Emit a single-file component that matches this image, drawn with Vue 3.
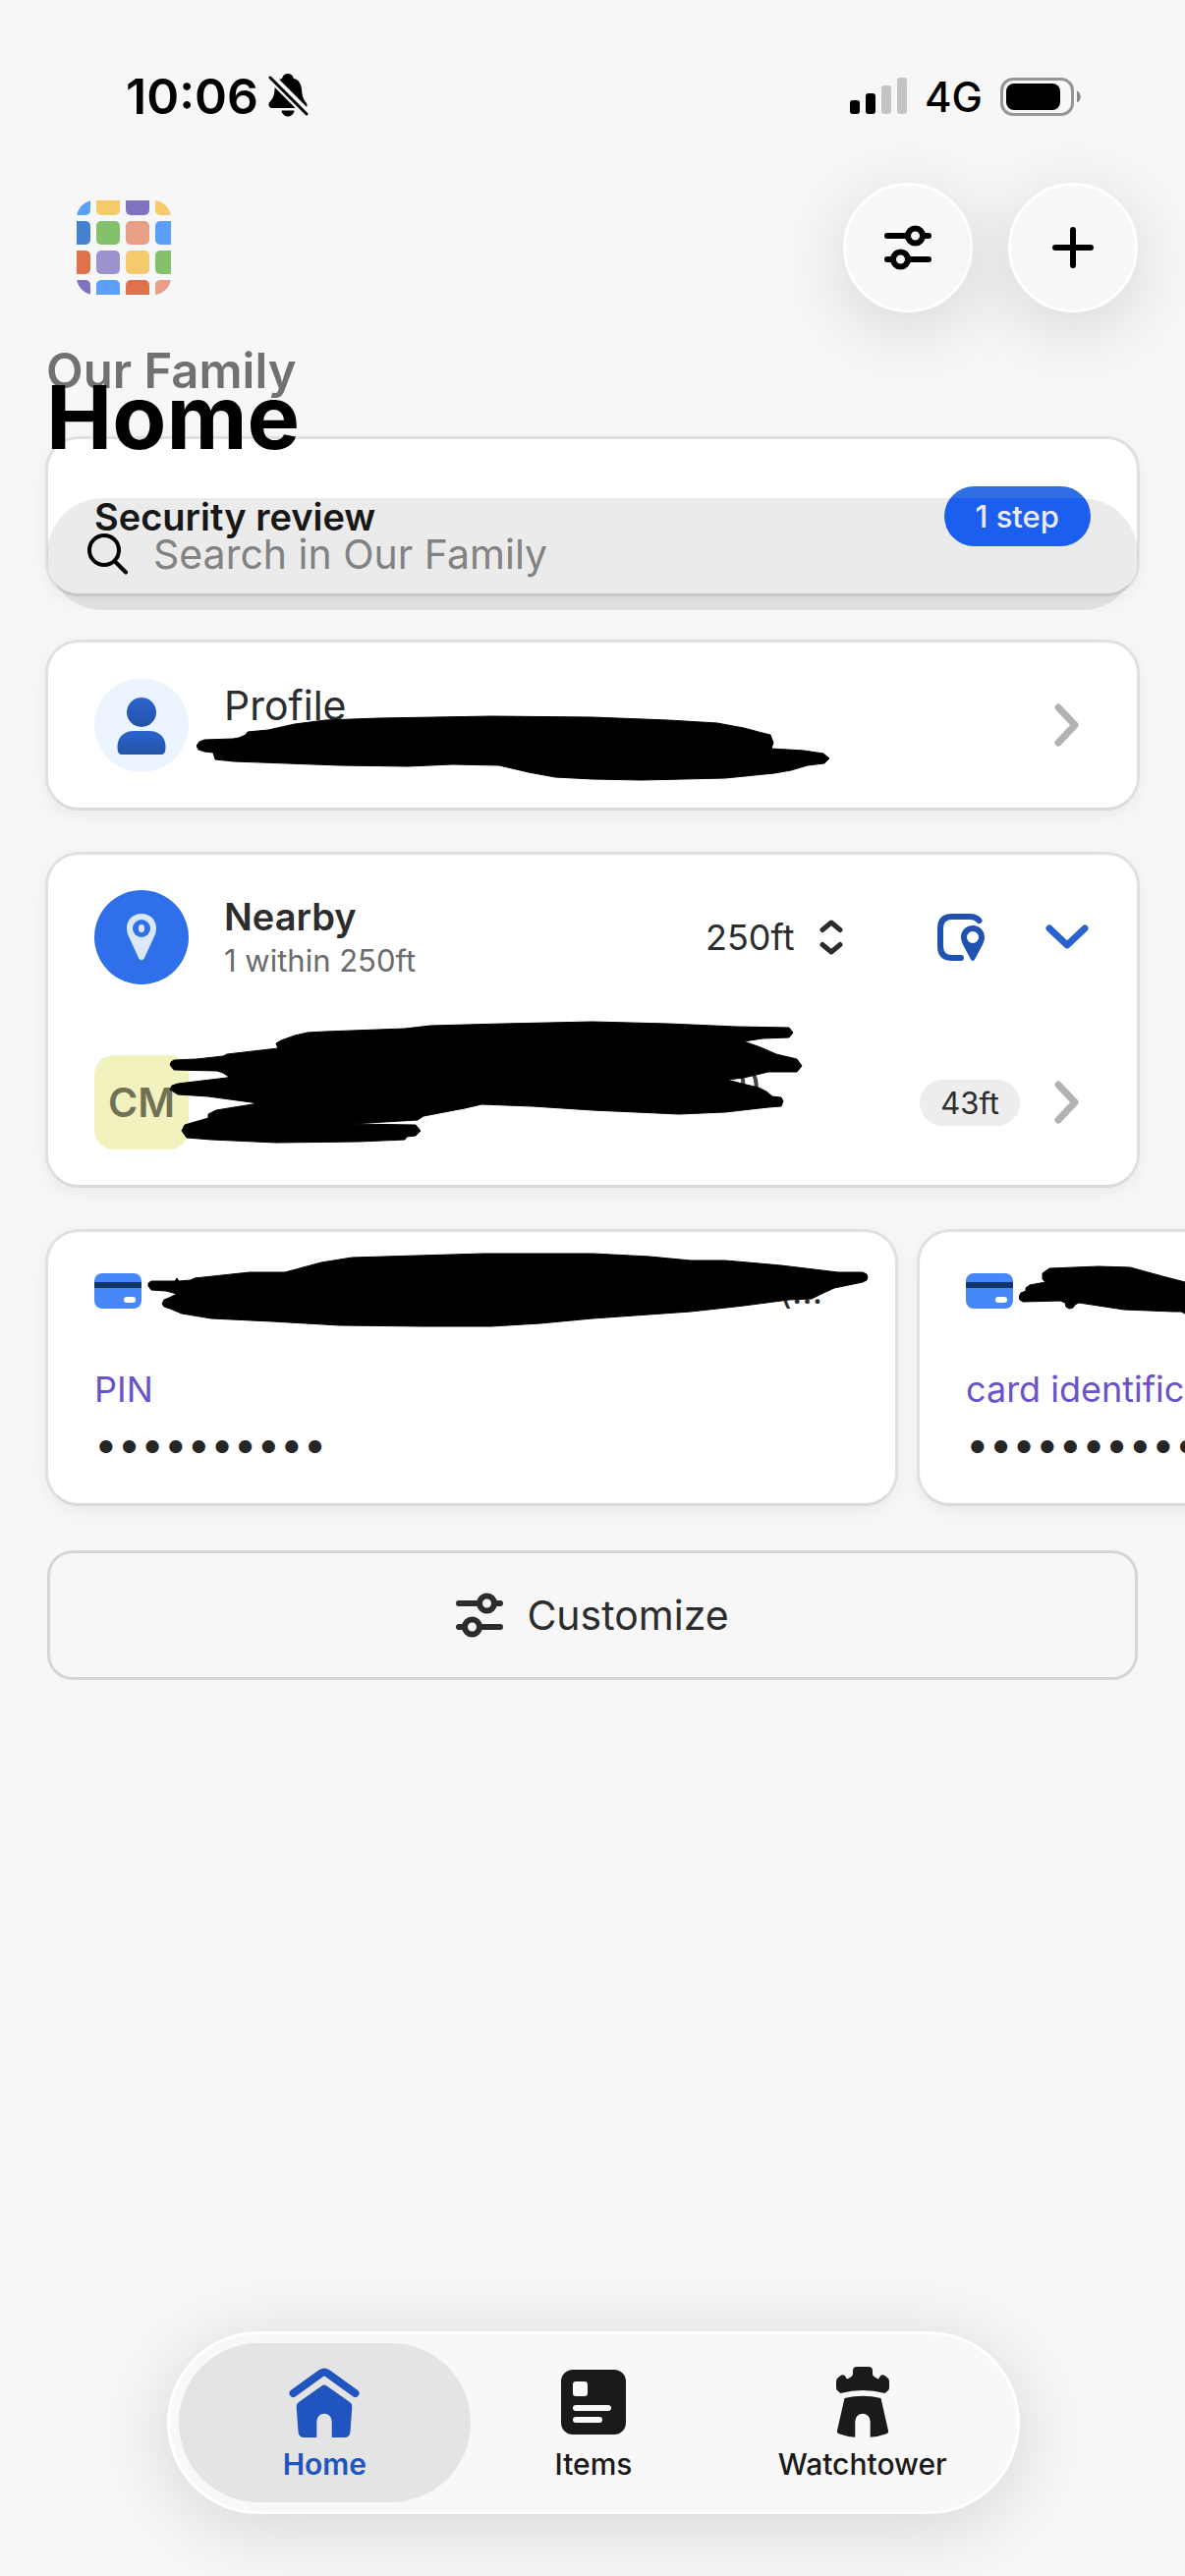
<template>
  <div class="screen">
    <div class="status-bar">
      <div class="status-left">
        <span class="time">10:06</span>
        <svg class="bell" viewBox="0 0 42 46" aria-hidden="true">
          <path d="M20 0c4 0 5 2.500 6 5 5 1 7.500 5 8 11 .6 8 2 10 4.500 13.500 2.500 3.500 0 5.500-2.500 5.500H4c-3 0-4.500-3-3-5.500C4 26 6 24 6.500 16 7 10 9 6 14 5c1-2.500 2-5 6-5z" />
          <path d="M13.500 37.500h13c-.5 3.500-3 6-6.500 6s-6-2.500-6.500-6z" />
          <path class="bell-gap" d="M-1 0 42 43" />
          <path class="bell-slash" d="M2 4 39 41" />
        </svg>
      </div>
      <div class="status-right">
        <svg class="signal" viewBox="0 0 58 38" aria-hidden="true">
          <rect x="0" y="23" width="10" height="14" rx="3" />
          <rect x="16" y="16" width="10" height="21" rx="3" />
          <rect class="off" x="32" y="8" width="10" height="29" rx="3" />
          <rect class="off" x="48" y="0" width="10" height="37" rx="3" />
        </svg>
        <span class="network">4G</span>
        <svg class="battery" viewBox="0 0 82 39" aria-hidden="true">
          <rect class="shell" x="1.500" y="1.500" width="72" height="36" rx="11.500" />
          <rect x="6" y="6" width="55" height="27" rx="8" />
          <path class="tip" d="M78 13.500c5 2 5 10 0 12z" />
        </svg>
      </div>
    </div>

    <header class="top-bar">
      <button class="account" aria-label="Accounts">
        <svg viewBox="0 0 96 96" aria-hidden="true">
          <defs>
            <clipPath id="logo-clip"><rect width="96" height="96" rx="18" /></clipPath>
          </defs>
          <g clip-path="url(#logo-clip)">
            <rect width="96" height="96" fill="#f5f7f9" />
            <rect v-for="(t, i) in tiles" :key="i" :x="t.x" :y="t.y" width="24" height="24" rx="5" :fill="t.color" />
          </g>
        </svg>
      </button>
      <div class="top-actions">
        <button class="round-btn" aria-label="Customize home">
          <svg class="icon-48" viewBox="0 0 48 48" aria-hidden="true">
            <path class="line" d="M3 12h21M39 12h6M3 36h6M24 36h21" />
            <circle class="line" cx="31.500" cy="12" r="7.500" />
            <circle class="line" cx="16.500" cy="36" r="7.500" />
          </svg>
        </button>
        <button class="round-btn" aria-label="Add item">
          <svg class="icon-48" viewBox="0 0 48 48" aria-hidden="true">
            <path class="line" d="M24 6v36M6 24h36" />
          </svg>
        </button>
      </div>
    </header>

    <div class="titles">
      <p class="vault-name">Our Family</p>
      <h1>Home</h1>
    </div>

    <main class="content">
      <section class="security">
        <div class="card security-card">
          <h2>Security review</h2>
          <button class="step-btn">1 step</button>
        </div>
        <form class="search" @submit.prevent>
          <svg class="search-icon" viewBox="0 0 42 42" aria-hidden="true">
            <circle cx="17" cy="17" r="15" />
            <path d="M27.500 28 39 39.500" />
          </svg>
          <input v-model="query" type="text" aria-label="Search" placeholder="Search in Our Family" />
        </form>
      </section>

      <section class="card">
        <div class="row">
          <span class="avatar profile-avatar">
            <svg viewBox="0 0 96 96" aria-hidden="true">
              <defs>
                <linearGradient id="person" x1="0" y1="0" x2="0" y2="1">
                  <stop offset="0" stop-color="#2b64cf" />
                  <stop offset="1" stop-color="#2253a6" />
                </linearGradient>
              </defs>
              <circle cx="48" cy="35" r="15" fill="url(#person)" />
              <path d="M23.500 70c0-10 7-16 17-16h15c10 0 17 6 17 16 0 5-1 8-4.500 8H28c-3.500 0-4.500-3-4.500-8z" fill="url(#person)" />
            </svg>
          </span>
          <div class="row-text">
            <span class="row-label">Profile</span>
            <span class="row-hidden"></span>
          </div>
          <button class="icon-btn" aria-label="Open profile">
            <svg class="icon-48 next" viewBox="0 0 48 48" aria-hidden="true"><path d="M15 6l17 18-17 18" /></svg>
          </button>
        </div>
        <svg class="ink profile-ink" viewBox="200 728 645 67" aria-hidden="true">
          <path d="M200 759 203 755 208 753 237 752 243 751 250 748 252 745 273 743 300 737 331 733 385 731 500 729 603 730 680 733 730 736 757 741 772 745 784 748 787 756 785 762 818 764 838 767 844 772 839 777 822 779 805 784 788 787 738 792 653 794 603 793 565 791 538 786 508 779 461 778 415 780 346 779 238 775 219 773 217 766 208 765 202 763z" />
        </svg>
      </section>

      <section class="card nearby">
        <div class="row">
          <span class="avatar nearby-avatar">
            <svg viewBox="0 0 96 96" aria-hidden="true">
              <path d="M48 24c9 0 15 6.500 15 15 0 4-1.500 7-3 10.500L51 69c-1.500 3-4.500 3-6 0l-9-19.500c-1.500-3.500-3-6.500-3-10.500 0-8.500 6-15 15-15z" />
              <circle class="hole" cx="48" cy="39" r="9" />
              <rect x="45" y="35" width="6" height="8" rx="3" />
            </svg>
          </span>
          <div class="row-text">
            <h2>Nearby</h2>
            <span class="sub">1 within 250ft</span>
          </div>
          <label class="range">
            <select v-model="range" aria-label="Distance">
              <option>250ft</option>
              <option>500ft</option>
            </select>
            <svg class="updown" viewBox="0 0 24 36" aria-hidden="true">
              <path d="M3 10.500 12 3l9 7.500M3 25.500l9 7.500 9-7.500" />
            </svg>
          </label>
          <button class="icon-btn" aria-label="Locations">
            <svg class="icon-48 location" viewBox="0 0 48 48" aria-hidden="true">
              <path class="frame" d="M42.500 7Q39 3 33 3H15Q3 3 3 15v18q0 12 12 12h9" />
              <path fill-rule="evenodd" d="M36 12c7 0 12 5 12 12 0 3-1 5-2 7.500L38 46.500q-2 3-4 0l-8-15C25 29 24 27 24 24c0-7 5-12 12-12zm0 6a6 6 0 1 0 0 12 6 6 0 0 0 0-12z" />
            </svg>
          </button>
          <button class="icon-btn" aria-label="Collapse nearby" @click="nearbyOpen = !nearbyOpen">
            <svg class="icon-48 collapse" viewBox="0 0 48 48" aria-hidden="true"><path d="M6 15l18 17L42 15" /></svg>
          </button>
        </div>
        <div v-if="nearbyOpen" class="row">
          <span class="avatar initials">CM</span>
          <div class="row-text"></div>
          <span class="distance">43ft</span>
          <button class="icon-btn" aria-label="Open item">
            <svg class="icon-48 next" viewBox="0 0 48 48" aria-hidden="true"><path d="M15 6l17 18-17 18" /></svg>
          </button>
        </div>
        <svg v-if="nearbyOpen" class="ink nearby-ink" viewBox="172 1039 646 126" aria-hidden="true">
          <path class="trace" d="M755 1095q2 6 1 11M767 1093q4 9 2 17" />
          <path d="M173 1084 174 1081 177 1079 200 1078 227 1075 231 1073 283 1067 281 1062 286 1059 300 1054 313 1051 331 1050 412 1047 438 1044 512 1042 603 1040 680 1042 749 1045 803 1046 807 1051 803 1056 776 1057 757 1060 774 1066 790 1073 811 1078 816 1085 811 1091 782 1091 757 1097 740 1099 755 1103 772 1107 780 1111 786 1116 795 1117 797 1121 795 1126 782 1127 738 1132 691 1134 603 1130 542 1126 490 1124 473 1128 431 1136 425 1140 358 1144 423 1145 428 1151 423 1156 414 1157 412 1160 365 1162 281 1163 215 1160 190 1158 185 1151 188 1145 212 1138 212 1134 220 1130 263 1123 212 1116 181 1114 173 1109 175 1105 181 1103 231 1097 233 1096 227 1092 221 1090 177 1089z" />
        </svg>
      </section>

      <section class="carousel" aria-label="Pinned items">
        <article v-for="item in items" :key="item.field" class="card item-card">
          <div class="item-title">
            <svg class="card-icon" viewBox="0 0 48 36" aria-hidden="true">
              <rect width="48" height="36" rx="8" fill="#4688f7" />
              <rect y="9" width="48" height="6" fill="#14346c" />
              <rect x="30" y="24" width="12" height="6" rx="3" fill="#fff" />
            </svg>
            <span>{{ item.title }}</span>
          </div>
          <p class="field-name">{{ item.field }}</p>
          <p class="field-value">••••••••••</p>
          <svg class="ink item-ink" :viewBox="item.inkBox" :style="{ width: item.inkWidth + 'px' }" aria-hidden="true">
            <path :d="item.ink" />
          </svg>
        </article>
      </section>

      <button class="customize">
        <svg class="icon-48" viewBox="0 0 48 48" aria-hidden="true">
          <path class="line" d="M3 12h21M39 12h6M3 36h6M24 36h21" />
          <circle class="line" cx="31.500" cy="12" r="7.500" />
          <circle class="line" cx="16.500" cy="36" r="7.500" />
        </svg>
        <span>Customize</span>
      </button>
    </main>

    <nav class="tab-bar">
      <button class="tab" :class="{ active: tab === 'home' }" @click="tab = 'home'">
        <svg class="tab-icon" viewBox="0 0 72 72" aria-hidden="true">
          <path class="roof" d="M4.500 27 33 6.500q3-2 6 0L67.500 27" />
          <path d="M33.500 19.500q2.500-2 5 0L62 36q2.500 1.500 2.300 5L62.500 66q-.5 6-6 6H43.700V55.500a7.700 7.700 0 0 0-15.400 0V72H15.500q-5.500 0-6-6L7.700 41q-.2-3.500 2.300-5z" />
        </svg>
        <span>Home</span>
      </button>
      <button class="tab" :class="{ active: tab === 'items' }" @click="tab = 'items'">
        <svg class="tab-icon" viewBox="0 0 72 72" aria-hidden="true">
          <rect x="3" y="3" width="66" height="66" rx="12" />
          <rect class="cut" x="15" y="15" width="15" height="15" rx="3" />
          <rect class="cut" x="15" y="39" width="39" height="6" rx="3" />
          <rect class="cut" x="15" y="51" width="30" height="6" rx="3" />
        </svg>
        <span>Items</span>
      </button>
      <button class="tab" :class="{ active: tab === 'watchtower' }" @click="tab = 'watchtower'">
        <svg class="tab-icon" viewBox="0 0 72 72" aria-hidden="true">
          <path d="M30 0h12q4 0 4 4v3q0 2 1.500 3l4 2.500q1.500-.5 2-2.500 1.500-3 5-1l2.500 2q2 1.500 2 4v6.500q0 2-1.500 3l-3 2.500Q36 21 13.500 27l-3-2.500q-1.500-1-1.500-3V15q0-2.500 2-4l2.500-2q3.500-2 5 1 .5 2 2 2.500l4-2.500Q26 9 26 7V4q0-4 4-4z" />
          <path d="M17.500 32Q36 27.500 54.500 32L62 65q.5 2.500-2.500 3.500-7 2.500-15.800 3.200V55.500a7.700 7.700 0 0 0-15.400 0v16.200q-8.800-.7-15.800-3.200-3-1-2.500-3.500z" />
        </svg>
        <span>Watchtower</span>
      </button>
    </nav>
  </div>
</template>

<script setup>
import { ref } from 'vue'

const query = ref('')
const range = ref('250ft')
const nearbyOpen = ref(true)
const tab = ref('home')

// 账户图标的彩色方块
const tileColors = [
  ['#5b9ff8', '#f5ca6b', '#7f74c2', '#f5ca6b'],
  ['#4681d0', '#85c06b', '#e89f86', '#5b9ff8'],
  ['#df724a', '#9b92cf', '#f5ca6b', '#85c06b'],
  ['#7f74c2', '#5b9ff8', '#df724a', '#e89f86']
]
const tiles = tileColors.flatMap((row, r) =>
  row.map((color, c) => ({ x: -10 + c * 30, y: -9 + r * 30, color }))
)

const items = [
  {
    title: '(…',
    field: 'PIN',
    inkWidth: 734,
    inkBox: '150 1275 734 77',
    ink: 'M151 1309 151 1306 154 1304 178 1304 180 1301 182 1304 194 1303 198 1301 254 1295 290 1295 327 1285 358 1280 492 1276 603 1276 661 1279 703 1283 738 1283 795 1288 853 1295 878 1295 882 1297 883 1300 882 1303 878 1305 849 1311 836 1317 826 1322 803 1323 757 1329 703 1335 603 1342 550 1347 500 1350 430 1350 346 1349 277 1345 215 1342 185 1337 173 1332 167 1330 165 1327 167 1323 172 1321 180 1317 169 1314 154 1313z'
  },
  {
    title: '',
    field: 'card identification number',
    inkWidth: 180,
    inkBox: '1034 1275 180 77',
    ink: 'M1034 1320 1036 1316 1041 1314 1041 1311 1045 1308 1061 1305 1058 1302 1058 1296 1065 1291 1115 1289 1147 1290 1180 1299 1203 1305 1214 1308 1214 1337 1203 1337 1199 1335 1191 1335 1141 1333 1095 1326 1091 1328 1089 1331 1085 1332 1082 1330 1081 1326 1076 1324 1038 1325 1035 1323z'
  }
]
</script>

<style>
body { margin: 0; background: #f7f7f7; }
</style>

<style scoped>
.screen {
  display: flex; flex-direction: column; min-height: 100vh; padding: 0 46px 63px; box-sizing: border-box;
  overflow: hidden; background: #f7f7f7; color: #2c2c2c; font-family: Inter, "Liberation Sans", sans-serif;
}
h1, h2, p { margin: 0; }
button { padding: 0; border: none; background: none; color: inherit; font-family: inherit; cursor: pointer; }
svg { display: block; flex-shrink: 0; }
.icon-48 { width: 48px; height: 48px; }
.line { fill: none; stroke: currentColor; stroke-width: 6; stroke-linecap: round; }

.status-bar { display: flex; justify-content: space-between; padding: 67px 60px 0 82px; color: #000; }
.status-left, .status-right { display: flex; align-items: center; height: 62px; }
.status-left { gap: 10px; }
.time { font-size: 50px; font-weight: 600; }
.bell { width: 42px; height: 46px; }
.bell-gap { stroke: #f7f7f7; stroke-width: 9; }
.bell-slash { stroke: #000; stroke-width: 3; stroke-linecap: round; }
.signal { width: 58px; height: 38px; }
.signal .off { fill: #c4c4c4; }
.network { margin: 0 18px; font-size: 42px; font-weight: 500; }
.battery { width: 82px; height: 39px; }
.battery .shell { fill: none; stroke: #969696; stroke-width: 3; }
.battery .tip { fill: #888; }

.top-bar { display: flex; justify-content: space-between; align-items: center; margin-top: 57px; padding: 0 2px 0 32px; }
.account svg { width: 96px; height: 96px; }
.top-actions { display: flex; gap: 36px; }
.round-btn {
  display: flex; align-items: center; justify-content: center; width: 132px; height: 132px; box-sizing: border-box;
  border: 3px solid #fff; border-radius: 50%; background: #f8f8f8; color: #000; box-shadow: 0 15px 75px rgba(0, 0, 0, 0.14);
}

/* 大标题与卡片重叠 */
.titles { position: relative; z-index: 2; margin: 30px 0 -29px 1px; pointer-events: none; }
.vault-name { color: #717171; font-size: 49px; font-weight: 600; line-height: 60px; }
h1 { margin-top: -31px; color: #000; font-size: 90px; font-weight: 700; line-height: 96px; }

.content { display: flex; flex-direction: column; gap: 42px; }
.card {
  position: relative; padding: 36px 47px; border: 3px solid #e0e0e0; border-bottom-color: #dadada; border-radius: 34px;
  background: #fff; box-shadow: 0 6px 18px rgba(0, 0, 0, 0.05);
}
.security { position: relative; margin-bottom: 2px; }
.security-card { display: flex; align-items: center; justify-content: space-between; padding: 48px 47px; position: static; }
h2 { font-size: 38px; font-weight: 600; line-height: 48px; }
.security-card h2 { color: #1a1a1a; }
.step-btn {
  position: relative; z-index: 2; padding: 0 32px; border-radius: 31px; color: #ebebf2;
  background: linear-gradient(#2f6fe3 12px, #1c5ff0 12px); font-size: 31px; font-weight: 500; line-height: 61px;
}
.search {
  position: absolute; z-index: 1; top: 63px; left: 2px; right: 2px; display: flex; align-items: center; gap: 25px;
  padding: 0 41px; border-radius: 57px; background: rgba(0, 0, 0, 0.08);
}
.search-icon { width: 42px; height: 42px; fill: none; stroke: #000; stroke-width: 4; stroke-linecap: round; }
.search input {
  flex: 1; min-width: 0; height: 114px; padding: 0; border: none; outline: none; background: none;
  font-family: inherit; font-size: 41px; color: #000;
}
.search input::placeholder { color: #828282; opacity: 1; }

.row { display: flex; align-items: center; }
.avatar { display: flex; align-items: center; justify-content: center; flex-shrink: 0; width: 96px; height: 96px; border-radius: 50%; }
.avatar svg { width: 96px; height: 96px; }
.profile-avatar { background: #ebf4ff; }
.nearby-avatar { background: #2f70ea; }
.nearby-avatar svg { fill: #d9e9fb; }
.nearby-avatar .hole { fill: #2f70ea; }
.initials { border-radius: 20px; background: #f2f2bf; color: #717155; font-size: 41px; font-weight: 600; }
.row-text { display: flex; flex-direction: column; flex: 1; margin-left: 36px; }
.row-label { font-size: 41px; line-height: 48px; }
.row-hidden { height: 40px; }
.sub { color: #6b6b6b; font-size: 31px; line-height: 42px; }
.icon-btn { width: 48px; height: 48px; }
.next { fill: none; stroke: #b2b2b2; stroke-width: 7; stroke-linecap: round; stroke-linejoin: round; }
.range { display: flex; align-items: center; gap: 24px; margin-right: 96px; }
.range select {
  appearance: none; padding: 0; border: none; outline: none; background: none; color: #2c2c2c;
  font-family: inherit; font-size: 36px; line-height: 48px;
}
.updown { width: 24px; height: 36px; fill: none; stroke: #2c2c2c; stroke-width: 5; stroke-linecap: round; stroke-linejoin: round; }
.location { fill: #2053af; }
.location .frame { fill: none; stroke: #2053af; stroke-width: 6; stroke-linecap: round; }
.collapse { fill: none; stroke: #2862cc; stroke-width: 7; stroke-linecap: round; stroke-linejoin: round; }
.icon-btn + .icon-btn { margin-left: 60px; }
.nearby { display: flex; flex-direction: column; gap: 72px; }
.distance { margin-right: 24px; padding: 0 21px; border-radius: 24px; background: #ededed; font-size: 31px; line-height: 47px; }

.ink { position: absolute; fill: #000; stroke: #000; stroke-width: 1; stroke-linejoin: round; pointer-events: none; }
.ink .trace { fill: none; stroke: #444; stroke-width: 4; }
.profile-ink { left: 151px; top: 74px; width: 645px; height: 67px; }
.nearby-ink { left: 123px; top: 169px; width: 646px; height: 126px; }
.item-ink { left: 101px; top: 21px; height: 77px; }

.carousel { display: flex; gap: 19px; margin-right: -46px; }
.item-card { flex: 0 0 calc(75% - 2px); box-sizing: border-box; padding-bottom: 28px; }
.item-title { display: flex; align-items: center; justify-content: space-between; height: 48px; padding-right: 27px; font-size: 36px; }
.card-icon { width: 48px; height: 36px; }
.field-name { margin-top: 52px; color: #6a53c9; font-size: 36px; line-height: 48px; white-space: nowrap; }
.field-value { font-size: 42px; line-height: 64px; color: #262626; }

.customize {
  display: flex; align-items: center; justify-content: center; gap: 24px; margin: 3px 2px 0; padding: 39px 0;
  border: 3px solid #d6d6d6; border-radius: 26px; font-size: 41px; line-height: 48px;
}

.tab-bar {
  display: flex; align-self: center; width: 78%; margin: auto 0 0 2px; padding: 9px; box-sizing: border-box;
  border: 3px solid #fff; border-radius: 93px; background: #f8f8f8; box-shadow: 0 12px 80px rgba(0, 0, 0, 0.14);
}
.tab {
  display: flex; flex: 1; flex-direction: column; align-items: center; gap: 9px; padding: 24px 0 21px;
  border-radius: 81px; color: #1a1a1a; font-size: 30px; font-weight: 500; line-height: 36px;
}
.tab + .tab { margin-left: -24px; }
.tab.active { background: #e4e4e4; color: #2055bf; font-weight: 600; }
.tab-icon { width: 72px; height: 72px; fill: currentColor; }
.tab-icon .cut { fill: #f8f8f8; }
.roof { fill: none; stroke: currentColor; stroke-width: 8; stroke-linecap: round; stroke-linejoin: round; }
</style>
